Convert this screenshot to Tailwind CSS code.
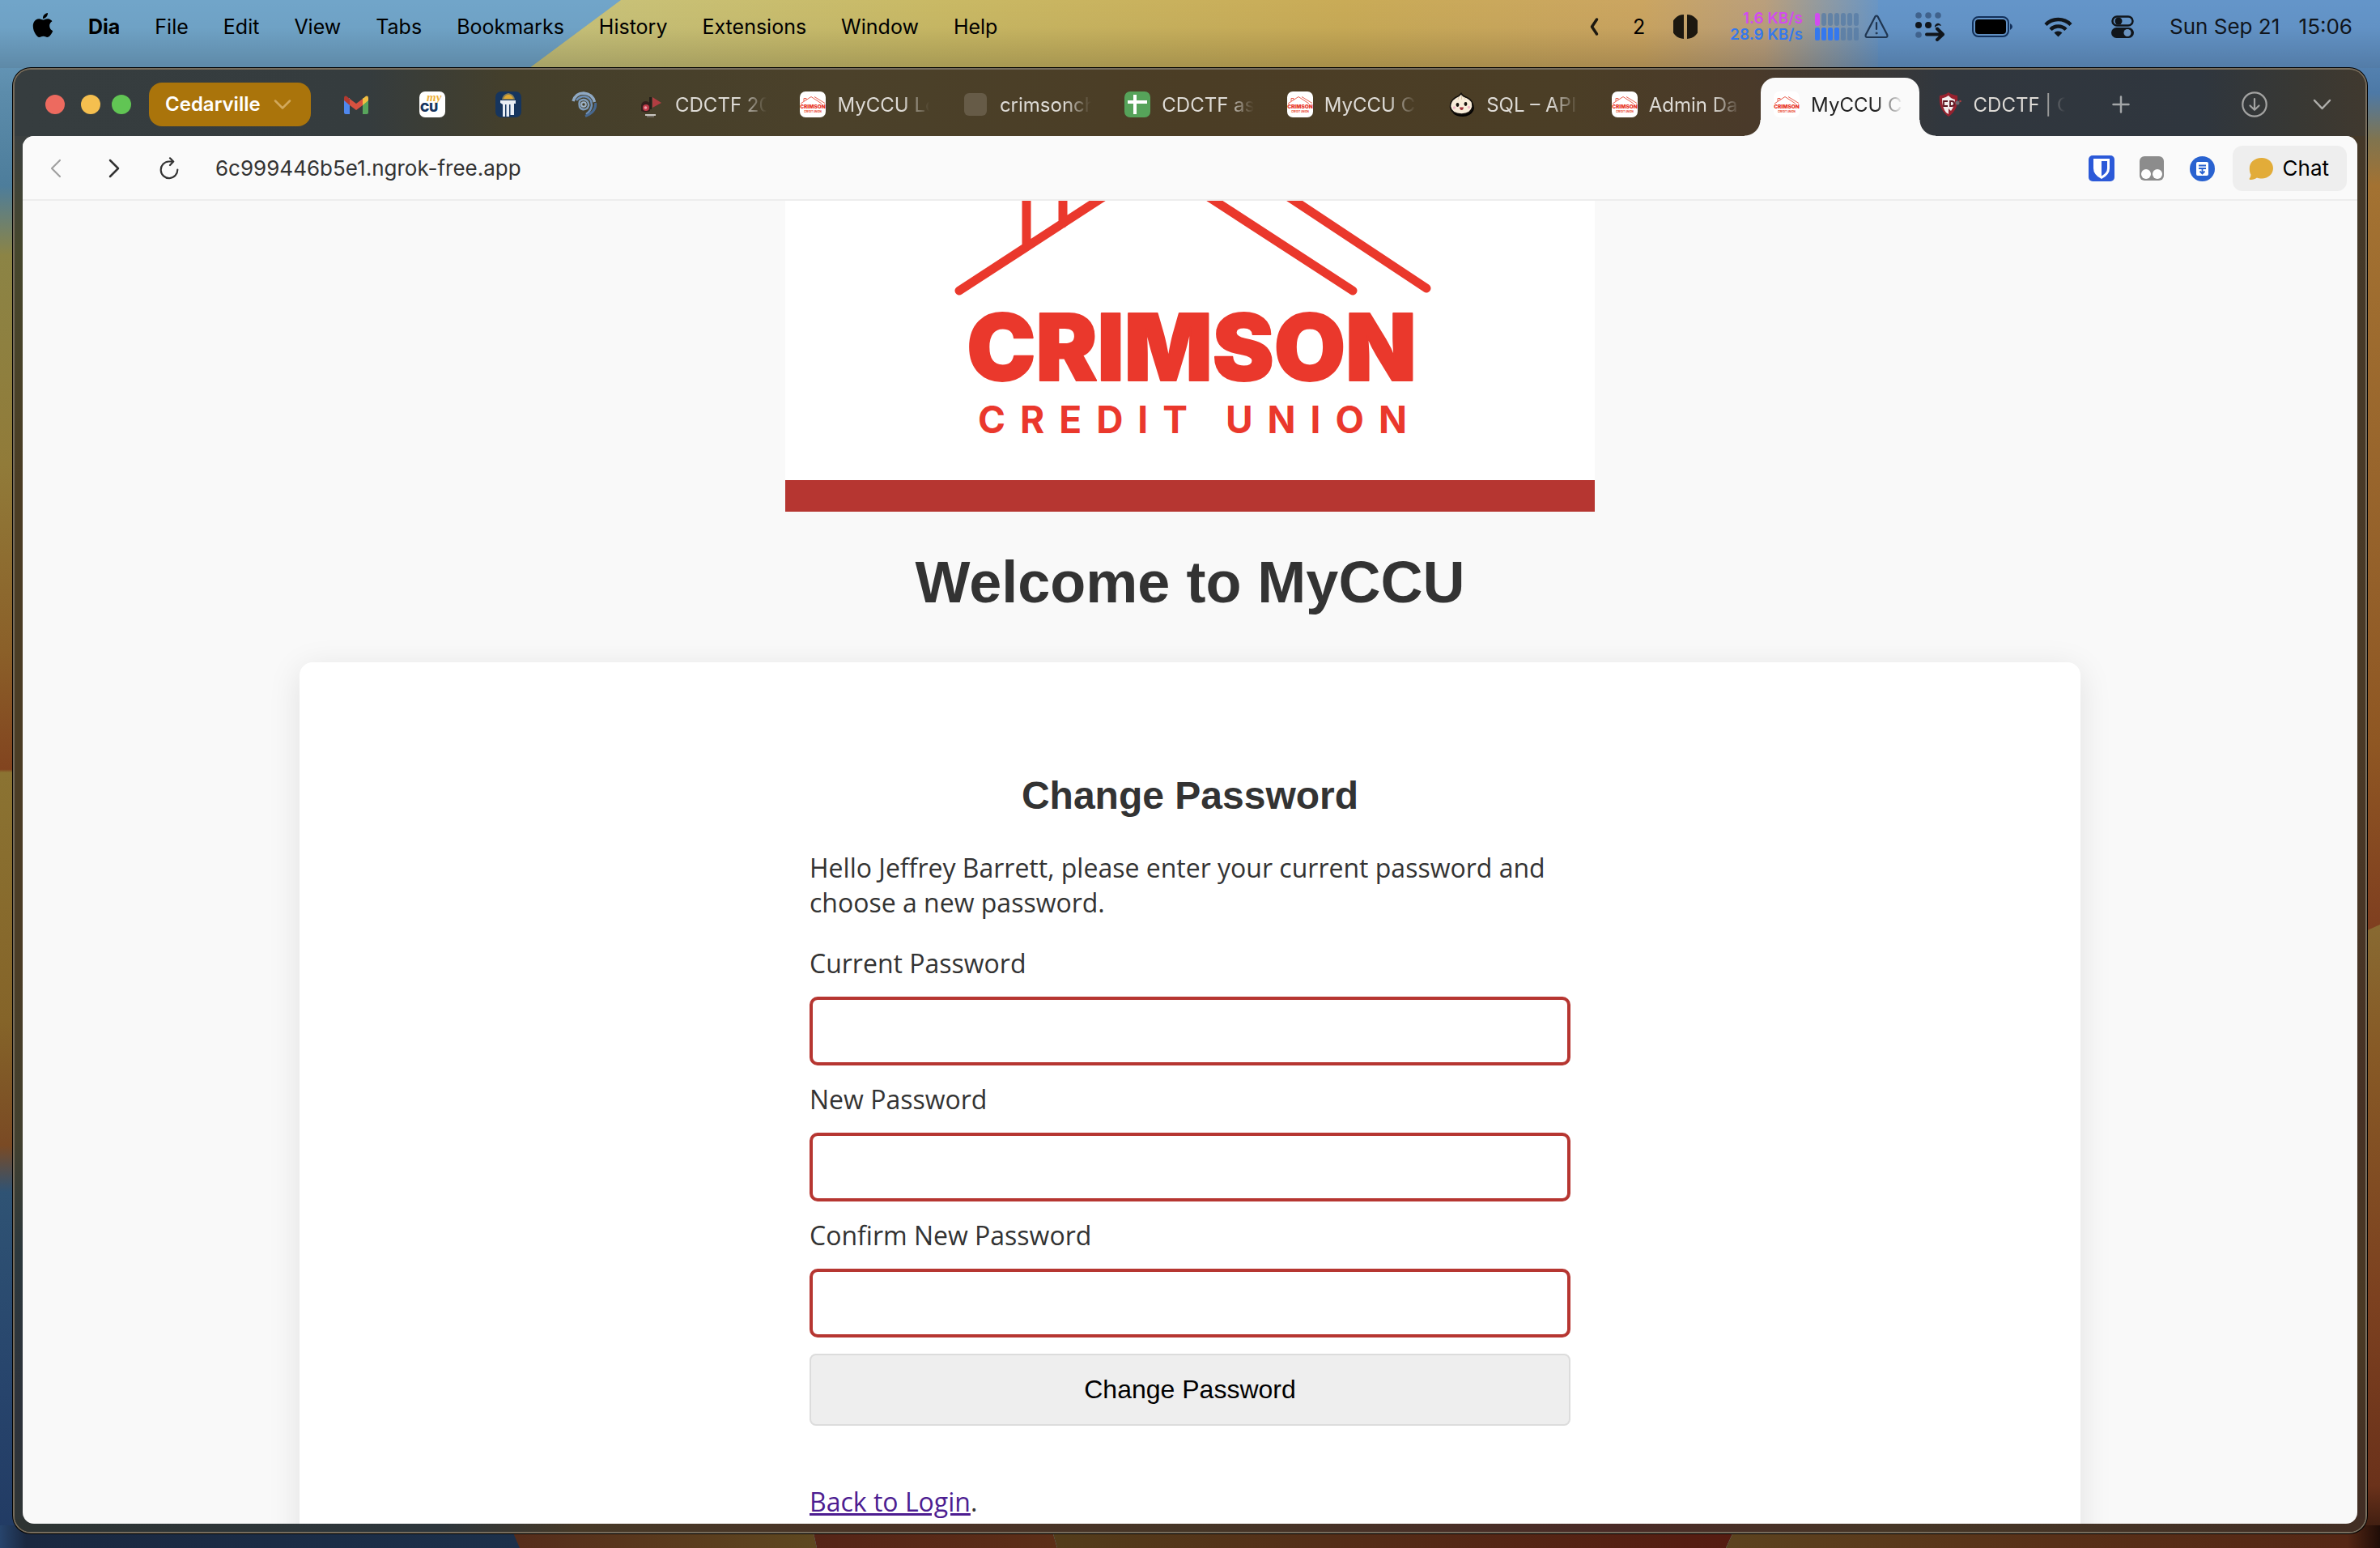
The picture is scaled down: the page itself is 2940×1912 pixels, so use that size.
<!DOCTYPE html>
<html lang="en">
<head>
<meta charset="utf-8">
<title>MyCCU Change Password</title>
<script src="https://cdn.jsdelivr.net/npm/@tailwindcss/browser@4"></script>
</head>
<body class="relative flex h-screen flex-col overflow-hidden bg-[#6c9fc5] font-['Inter',sans-serif] text-black">

<!-- Wallpaper -->
<svg class="absolute inset-0 -z-10 h-full w-full" viewBox="0 0 2940 1912" preserveAspectRatio="none" aria-hidden="true">
  <defs>
    <linearGradient id="wTop"><stop offset="0" stop-color="#c8c37c"/><stop offset=".3" stop-color="#c9b965"/><stop offset=".6" stop-color="#c9ab57"/><stop offset=".82" stop-color="#cba561"/><stop offset=".91" stop-color="#ba9f7c"/><stop offset="1" stop-color="#6495c9"/></linearGradient>
    <linearGradient id="wShade" x2="0" y2="1"><stop offset="0" stop-color="#000" stop-opacity="0"/><stop offset=".4" stop-color="#000" stop-opacity=".02"/><stop offset="1" stop-color="#000" stop-opacity=".17"/></linearGradient>
    <linearGradient id="wLeft" gradientUnits="userSpaceOnUse" x1="0" y1="0" x2="0" y2="1912"><stop offset="0" stop-color="#72a6cb"/><stop offset=".06" stop-color="#5c8cab"/><stop offset=".12" stop-color="#4d7d9b"/><stop offset=".165" stop-color="#8c8445"/><stop offset=".3" stop-color="#917b39"/><stop offset=".42" stop-color="#8b6029"/><stop offset=".497" stop-color="#82441f"/><stop offset=".499" stop-color="#8b7332"/><stop offset=".66" stop-color="#856429"/><stop offset=".74" stop-color="#7a4a24"/><stop offset=".77" stop-color="#2f5374"/><stop offset=".9" stop-color="#27446c"/><stop offset="1" stop-color="#213a63"/></linearGradient>
    <linearGradient id="wRight" gradientUnits="userSpaceOnUse" x1="0" y1="0" x2="0" y2="1912"><stop offset="0" stop-color="#6495c9"/><stop offset=".06" stop-color="#4d79a6"/><stop offset=".09" stop-color="#80744f"/><stop offset=".12" stop-color="#a37232"/><stop offset=".38" stop-color="#94602a"/><stop offset=".48" stop-color="#8f5723"/><stop offset=".6" stop-color="#7f3f20"/></linearGradient>
    <linearGradient id="wRight2" x2="0" y2="1"><stop offset="0" stop-color="#886a32"/><stop offset=".2" stop-color="#875a26"/><stop offset=".6" stop-color="#7c4120"/><stop offset=".9" stop-color="#6b321b"/><stop offset="1" stop-color="#2a140c"/></linearGradient>
    <linearGradient id="b1"><stop offset="0" stop-color="#27446c"/><stop offset=".05" stop-color="#1a2840"/><stop offset="1" stop-color="#1c304a"/></linearGradient>
    <linearGradient id="b2"><stop offset="0" stop-color="#552c1b"/><stop offset="1" stop-color="#5e4820"/></linearGradient>
    <linearGradient id="b3"><stop offset="0" stop-color="#552417"/><stop offset="1" stop-color="#5c2f18"/></linearGradient>
    <linearGradient id="b4"><stop offset="0" stop-color="#533d1b"/><stop offset=".4" stop-color="#542e18"/><stop offset="1" stop-color="#551b11"/></linearGradient>
    <linearGradient id="b5"><stop offset="0" stop-color="#5c431f"/><stop offset=".5" stop-color="#583018"/><stop offset=".95" stop-color="#552715"/><stop offset="1" stop-color="#200d07"/></linearGradient>
  </defs>
  <path d="M0 0H767L654 84H0Z" fill="#71a5c9"/>
  <path d="M767 0H2330V84H654Z" fill="url(#wTop)"/>
  <rect x="2320" width="620" height="84" fill="#6495c9"/>
  <rect width="2940" height="84" fill="url(#wShade)"/>
  <rect y="84" width="40" height="1828" fill="url(#wLeft)"/>
  <rect x="2900" y="84" width="40" height="1828" fill="url(#wRight)"/>
  <path d="M2900 1160L2940 1142V1912H2900Z" fill="url(#wRight2)"/>
  <path d="M0 1884H632L644 1912H0Z" fill="url(#b1)"/>
  <path d="M630 1884H1003L1009 1912H642Z" fill="url(#b2)"/>
  <path d="M1003 1884H1298L1306 1912H1009Z" fill="url(#b3)"/>
  <path d="M1298 1884H2145L2132 1912H1306Z" fill="url(#b4)"/>
  <path d="M2145 1884H2940V1912H2132Z" fill="url(#b5)"/>
</svg>

<!-- System menu bar -->
<header class="flex h-[66px] shrink-0 items-center justify-between pr-[34px] pl-10 text-[25px] leading-8 whitespace-nowrap">
  <nav class="flex items-center gap-[43px]" aria-label="Menu bar">
    <button aria-label="Apple menu"><svg class="-mt-1 h-[30px] w-[26px]" viewBox="1.7 0 20.6 24"><path d="M12.152 6.896c-.948 0-2.415-1.078-3.96-1.04-2.04.027-3.91 1.183-4.961 3.014-2.117 3.675-.546 9.103 1.519 12.09 1.013 1.454 2.208 3.09 3.792 3.039 1.52-.065 2.09-.987 3.935-.987 1.831 0 2.35.987 3.96.948 1.637-.026 2.676-1.48 3.676-2.948 1.156-1.688 1.636-3.325 1.662-3.415-.039-.013-3.182-1.221-3.22-4.857-.026-3.04 2.48-4.494 2.597-4.559-1.429-2.09-3.623-2.324-4.39-2.376-2-.156-3.675 1.09-4.61 1.09zM15.53 3.83c.843-1.012 1.4-2.427 1.245-3.83-1.207.052-2.662.805-3.532 1.818-.78.896-1.454 2.338-1.273 3.714 1.338.104 2.715-.688 3.559-1.701"/></svg></button>
    <button class="font-bold">Dia</button>
    <button>File</button>
    <button>Edit</button>
    <button>View</button>
    <button>Tabs</button>
    <button>Bookmarks</button>
    <button>History</button>
    <button>Extensions</button>
    <button>Window</button>
    <button>Help</button>
  </nav>
  <div class="flex items-center">
    <svg class="h-6 w-3" viewBox="0 0 12 24" fill="none" stroke="#1c1810" stroke-width="3.5" stroke-linecap="round" stroke-linejoin="round"><path d="M9.5 3L3.5 12L9.5 21"/></svg>
    <span class="ml-[42px] w-4">2</span>
    <svg class="ml-[34px] size-[30px]" viewBox="0 0 30 30" fill="#1c1810"><path d="M13 0A15 15 0 0 0 13 30ZM17 0A15 15 0 0 1 17 30Z"/></svg>
    <div class="ml-[34px] w-24 text-right text-[19px] leading-5 font-semibold"><div class="text-[#d24bf0]">1.6 KB/s</div><div class="text-[#3478ee]">28.9 KB/s</div></div>
    <svg class="ml-[15px] h-[34px] w-[54px]" viewBox="0 0 54 34"><g fill="#557ba6" fill-opacity=".75"><rect x="8" width="6" height="16" rx="3"/><rect x="16" width="6" height="16" rx="3"/><rect x="24" width="6" height="16" rx="3"/><rect x="32" width="6" height="16" rx="3"/><rect x="40" width="6" height="16" rx="3"/><rect x="48" width="6" height="16" rx="3"/><rect x="32" y="18" width="6" height="16" rx="2"/><rect x="40" y="18" width="6" height="16" rx="2"/><rect x="48" y="18" width="6" height="16" rx="2"/></g><rect width="6" height="16" rx="3" fill="#d24bf0"/><g fill="#3478ee"><rect y="18" width="6" height="16" rx="2"/><rect x="8" y="18" width="6" height="16" rx="2"/><rect x="16" y="18" width="6" height="16" rx="2"/><rect x="24" y="18" width="6" height="16" rx="2"/></g></svg>
    <svg class="ml-[7px] h-[30px] w-[30px]" viewBox="0 0 30 30" fill="none" stroke="#1f3550" stroke-width="2.2" stroke-linecap="round" stroke-linejoin="round"><path d="M13.4 2.5Q15 .5 16.6 2.500L28.300 25Q29 28 26.500 28H3.500Q1 28 1.700 25Z"/><path d="M15 10V18"/><circle cx="15" cy="23" r="1" fill="#1f3550" stroke-width="1"/></svg>
    <svg class="ml-[33px] h-9 w-9" viewBox="0 0 36 36" fill="#10151b"><g fill="#40628c"><circle cx="4" cy="4" r="3.800"/><circle cx="16" cy="4" r="3.800"/><circle cx="28" cy="4" r="3.800"/><circle cx="4" cy="28" r="3.800"/></g><circle cx="4" cy="16" r="4"/><circle cx="16" cy="16" r="4"/><path d="M24 19A4 4 0 1 1 32 17Q27 15 24 19Z"/><path d="M14 27.500H33M27 20.500L34 27.500L27 34" fill="none" stroke="#10151b" stroke-width="4" stroke-linecap="round" stroke-linejoin="round"/></svg>
    <svg class="ml-[34px] h-[26px] w-[50px]" viewBox="0 0 50 26"><rect x="1" y="1" width="44" height="24" rx="7" fill="none" stroke="#12305a" stroke-width="2"/><rect x="4" y="4" width="38" height="18" rx="4"/><path d="M47 9Q50 10.500 50 13Q50 15.500 47 17Z" fill="#12305a"/></svg>
    <svg class="ml-[39px] h-[26px] w-[35px]" viewBox="0 0 35 26" fill="none" stroke="#10151b" stroke-width="4.500"><path d="M2 10.500A22 22 0 0 1 33 10.500"/><path d="M8 16.500A13.500 13.500 0 0 1 27 16.500"/><path d="M12.500 20.500A7 7 0 0 1 22.500 20.500L17.500 25.500Z" fill="#10151b" stroke="none"/></svg>
    <svg class="ml-12 h-7 w-7" viewBox="0 0 28 28"><rect x="1.500" y="1.500" width="25" height="11" rx="5.500" fill="none" stroke="#10151b" stroke-width="2.500"/><circle cx="9" cy="7" r="4.500" fill="#10151b"/><rect y="15" width="28" height="13" rx="6.500" fill="#10151b"/><circle cx="20" cy="21.500" r="4.500" fill="#6a93c0"/></svg>
    <div class="ml-11 flex w-[226px] justify-between text-[26px] text-[#10151b]"><span>Sun Sep 21</span><span>15:06</span></div>
  </div>
</header>

<!-- Browser window -->
<div class="relative isolate mx-4 mt-[18px] mb-[18px] flex min-h-0 flex-1 flex-col overflow-hidden rounded-[22px] border-2 border-white/25 bg-[#4a3c27] px-2.5 pb-2.5 ring-1 ring-black">
  <svg class="absolute inset-0 -z-10 h-full w-full" viewBox="0 0 2904 1806" preserveAspectRatio="none" aria-hidden="true">
    <defs>
      <linearGradient id="fTop"><stop offset="0" stop-color="#363d3f"/><stop offset=".15" stop-color="#353c3e"/><stop offset=".21" stop-color="#443f2b"/><stop offset=".35" stop-color="#4b412a"/><stop offset=".5" stop-color="#4b3d25"/><stop offset=".66" stop-color="#4b3e26"/><stop offset=".74" stop-color="#4a3a2a"/><stop offset=".82" stop-color="#31373e"/><stop offset=".93" stop-color="#2f363e"/><stop offset=".97" stop-color="#383834"/><stop offset="1" stop-color="#40392f"/></linearGradient>
      <linearGradient id="fLeft" x2="0" y2="1"><stop offset="0" stop-color="#3b4040"/><stop offset=".08" stop-color="#46472d"/><stop offset=".25" stop-color="#4b3d24"/><stop offset=".6" stop-color="#4b3d26"/><stop offset=".72" stop-color="#42402f"/><stop offset=".8" stop-color="#2c383d"/><stop offset=".92" stop-color="#2d323b"/><stop offset="1" stop-color="#2f3535"/></linearGradient>
      <linearGradient id="fRight" x2="0" y2="1"><stop offset="0" stop-color="#443828"/><stop offset=".4" stop-color="#4a3a26"/><stop offset=".7" stop-color="#463124"/><stop offset=".85" stop-color="#4a3a24"/><stop offset="1" stop-color="#402c24"/></linearGradient>
      <linearGradient id="fBot"><stop offset="0" stop-color="#2e3433"/><stop offset=".18" stop-color="#2d363c"/><stop offset=".24" stop-color="#463826"/><stop offset=".4" stop-color="#4a3226"/><stop offset=".5" stop-color="#453526"/><stop offset=".68" stop-color="#4a2a26"/><stop offset=".8" stop-color="#463626"/><stop offset="1" stop-color="#422e24"/></linearGradient>
    </defs>
    <rect width="2904" height="100" fill="url(#fTop)"/>
    <rect y="82" width="30" height="1724" fill="url(#fLeft)"/>
    <rect x="2870" y="82" width="34" height="1724" fill="url(#fRight)"/>
    <rect y="1790" width="2904" height="16" fill="url(#fBot)"/>
  </svg>

  <!-- Tab strip -->
  <div class="flex h-[82px] shrink-0 items-center pt-1 pr-8 pl-7 text-[24px] leading-8 whitespace-nowrap text-[#dedbd6]">
    <button class="size-6 rounded-full bg-[#ed6a5f]" aria-label="Close"></button>
    <button class="ml-5 size-6 rounded-full bg-[#f5bf4f]" aria-label="Minimize"></button>
    <button class="ml-3.5 size-6 rounded-full bg-[#61c554]" aria-label="Zoom"></button>
    <button class="ml-[22px] flex h-[54px] w-[200px] items-center justify-between rounded-2xl bg-[#aa740b] pr-6 pl-5 font-semibold text-white">Cedarville
      <svg class="h-3 w-[22px]" viewBox="0 0 22 12" fill="none" stroke="#d2a95c" stroke-width="2.500" stroke-linecap="round" stroke-linejoin="round"><path d="M2 1.500L11 10.500L20 1.500"/></svg>
    </button>
    <div class="ml-[9px] flex h-full w-[379px] items-center">
      <button class="grid w-[94px] place-items-center" aria-label="Gmail">
        <svg class="h-[23px] w-[30px]" viewBox="0 0 30 23"><path d="M0 3H7V23H2Q0 23 0 21Z" fill="#4f87ed"/><path d="M23 3H30V21Q30 23 28 23H23Z" fill="#58a55c"/><path d="M23 4L27 .8Q30 -.5 30 3V6L23 12Z" fill="#f2be42"/><path d="M7 4L3 .8Q0 -.5 0 3V6L7 12Z" fill="#b3392f"/><path d="M7 4L15 10L23 4V12L15 18L7 12Z" fill="#d85140"/></svg>
      </button>
      <button class="grid w-[94px] place-items-center" aria-label="MyCU">
        <svg class="size-8" viewBox="0 0 32 32"><rect width="32" height="32" rx="7" fill="#fff"/><text x="9" y="12" font-family="Liberation Serif,serif" font-weight="700" font-style="italic" font-size="15" fill="#edb13c">my</text><text x="1" y="25" font-family="Inter,sans-serif" font-weight="900" font-size="15" fill="#17355f">CU</text></svg>
      </button>
      <button class="grid w-[94px] place-items-center" aria-label="University portal">
        <svg class="size-8" viewBox="0 0 32 32"><rect width="32" height="32" rx="7" fill="#16355e"/><path d="M8 10Q9 3 16 2Q23 3 24 10Z" fill="#8a7f55"/><path d="M10 9Q12 4 16 4Q20 4 22 9Z" fill="#e0a933"/><path d="M6 11H25V15H23V29H19V16H17V31H14V16H12V31H9V16L6 14Z" fill="#e9eef5"/><path d="M13 16H14V31H13ZM18 16H19V29H18Z" fill="#7f95b1"/></svg>
      </button>
      <button class="grid w-[94px] place-items-center" aria-label="Swirl">
        <svg class="size-8" viewBox="0 0 32 32" fill="none"><path d="M2 12Q5 2 15 2Q26 3 28.500 13" stroke="#8fa9c4" stroke-width="3.500"/><path d="M6 11Q10 6 16 6Q25 8 25 17Q24 24 18 28" stroke="#6d8fb6" stroke-width="2.500"/><path d="M29.500 14Q31 25 17 30.500" stroke="#47688f" stroke-width="3"/><path d="M10 12Q15 8 19.500 12Q23 17 19 21Q13 24 10 19Q9 15 10 12Z" stroke="#7f9bb8" stroke-width="2.500"/><circle cx="15" cy="16" r="2.800" stroke="#9fb6cd" stroke-width="2"/></svg>
      </button>
    </div>

    <div class="grid h-full flex-1 grid-cols-9 gap-[5px]" role="tablist">
      <button role="tab" class="flex min-w-0 items-center gap-3.5 pr-5 pl-4">
        <svg class="size-8 shrink-0" viewBox="0 0 32 32"><path d="M14 7H17V22H14Z" fill="#24201a"/><path d="M18 7L29 14L18 20Z" fill="#b13d42"/><path d="M4 17Q5 12 10 12Q15 12 15 18V24Q10 27 4 24Z" fill="#33201c"/><circle cx="10" cy="20" r="4" fill="#c23b4b"/><circle cx="9.500" cy="20" r="1.800" fill="#f0a0a8"/><path d="M9 28H22V30H9Z" fill="#c9c6c0"/><path d="M11 30H20V32H11Z" fill="#6d665c"/></svg>
        <span class="min-w-0 flex-1 overflow-hidden pt-0.5 text-left [mask-image:linear-gradient(to_right,#000_70%,transparent)]">CDCTF 20</span>
      </button>
      <button role="tab" class="flex min-w-0 items-center gap-3.5 pr-5 pl-4">
        <svg class="size-8 shrink-0" viewBox="0 0 32 32"><rect width="32" height="32" rx="7" fill="#fff"/><g id="ccu"><path d="M1 15L14 6.500L27 15M18 6.500L31 14.500M5 12V8.500H8V10.500" fill="none" stroke="#e9604f" stroke-width="1"/><text x="16" y="21" text-anchor="middle" font-family="Inter,sans-serif" font-weight="900" font-size="6.500" fill="#e8382b">CRIMSON</text><text x="16" y="26" text-anchor="middle" font-family="Inter,sans-serif" font-weight="700" font-size="3" fill="#e8382b">CREDIT UNION</text></g></svg>
        <span class="min-w-0 flex-1 overflow-hidden pt-0.5 text-left [mask-image:linear-gradient(to_right,#000_70%,transparent)]">MyCCU Lo</span>
      </button>
      <button role="tab" class="flex min-w-0 items-center gap-3.5 pr-5 pl-4">
        <svg class="size-8 shrink-0" viewBox="0 0 32 32"><rect x="2" y="2" width="28" height="28" rx="6" fill="#665b47"/></svg>
        <span class="min-w-0 flex-1 overflow-hidden pt-0.5 text-left [mask-image:linear-gradient(to_right,#000_70%,transparent)]">crimsonch</span>
      </button>
      <button role="tab" class="flex min-w-0 items-center gap-3.5 pr-5 pl-4">
        <svg class="size-8 shrink-0" viewBox="0 0 32 32"><rect width="32" height="32" rx="7" fill="#56a35a"/><path d="M11 4H15V11H28V15H15V28H11V15H4V11H11Z" fill="#fff"/></svg>
        <span class="min-w-0 flex-1 overflow-hidden pt-0.5 text-left [mask-image:linear-gradient(to_right,#000_70%,transparent)]">CDCTF as</span>
      </button>
      <button role="tab" class="flex min-w-0 items-center gap-3.5 pr-5 pl-4">
        <svg class="size-8 shrink-0" viewBox="0 0 32 32"><rect width="32" height="32" rx="7" fill="#fff"/><use href="#ccu"/></svg>
        <span class="min-w-0 flex-1 overflow-hidden pt-0.5 text-left [mask-image:linear-gradient(to_right,#000_70%,transparent)]">MyCCU C</span>
      </button>
      <button role="tab" class="flex min-w-0 items-center gap-3.5 pr-5 pl-4">
        <svg class="size-8 shrink-0" viewBox="0 0 32 32"><path d="M16 4Q20 7 26 10Q33 17 30 24Q26 31 17 31Q9 31 5 27Z" fill="#050403"/><path d="M15 2.500Q17 6 22 7.500Q30 11 29 19Q27 28 15.500 28Q3 28 1.500 19Q1 12 8 7.500Q13 5.500 15 2.500Z" fill="#f8ecd9" stroke="#15110c" stroke-width="1.600"/><path d="M15.500 5V10M12 7L11 10M19 7L20 10" stroke="#d9c7a8" stroke-width=".9"/><ellipse cx="10.500" cy="16.500" rx="1.900" ry="2.400" fill="#15110c"/><ellipse cx="20.500" cy="15.500" rx="1.900" ry="2.400" fill="#15110c"/><circle cx="6.500" cy="20" r="1.700" fill="#efb5c5"/><circle cx="24.500" cy="19.500" r="1.700" fill="#efb5c5"/><path d="M13 19.500H18Q17.500 23 15.500 23Q13.500 23 13 19.500Z" fill="#9e2f38"/></svg>
        <span class="min-w-0 flex-1 overflow-hidden pt-0.5 text-left [mask-image:linear-gradient(to_right,#000_70%,transparent)]">SQL – API</span>
      </button>
      <button role="tab" class="flex min-w-0 items-center gap-3.5 pr-5 pl-4">
        <svg class="size-8 shrink-0" viewBox="0 0 32 32"><rect width="32" height="32" rx="7" fill="#fff"/><use href="#ccu"/></svg>
        <span class="min-w-0 flex-1 overflow-hidden pt-0.5 text-left [mask-image:linear-gradient(to_right,#000_70%,transparent)]">Admin Da</span>
      </button>
      <button role="tab" aria-selected="true" class="relative flex min-w-0 items-center gap-3.5 pr-5 pl-4 text-[#222]">
        <span class="absolute inset-x-0 top-1.5 bottom-0 rounded-t-[18px] bg-[#fafafa]"></span>
        <span class="absolute bottom-0 -left-5 size-5 bg-[radial-gradient(circle_at_0_0,transparent_19px,#fafafa_20px)]"></span>
        <span class="absolute -right-5 bottom-0 size-5 bg-[radial-gradient(circle_at_100%_0,transparent_19px,#fafafa_20px)]"></span>
        <svg class="relative size-8 shrink-0" viewBox="0 0 32 32"><rect width="32" height="32" rx="7" fill="#fff"/><use href="#ccu"/></svg>
        <span class="relative min-w-0 flex-1 overflow-hidden pt-0.5 text-left [mask-image:linear-gradient(to_right,#000_70%,transparent)]">MyCCU Ch</span>
      </button>
      <button role="tab" class="flex min-w-0 items-center gap-3.5 pr-5 pl-4">
        <svg class="size-8 shrink-0" viewBox="0 0 32 32"><path d="M15 1Q19 4 26 5Q28 22 15 31Q2 22 4 5Q11 4 15 1Z" fill="#97222f"/><path d="M15 5Q11 8 7 8.500Q7 20 12 26L15 28V21L18 24Q22 19 23 10Q18 9 15 5Z" fill="#f3eeee"/><path d="M14 12H9V18H14M17 12V18H19Q22 18 22 15Q22 12 19 12Z" fill="none" stroke="#5d1721" stroke-width="1.800"/><circle cx="26" cy="14" r="2.500" fill="#6f6a70"/><circle cx="29.500" cy="12" r="1.300" fill="#b13d42"/></svg>
        <span class="min-w-0 flex-1 overflow-hidden pt-0.5 text-left [mask-image:linear-gradient(to_right,#000_70%,transparent)]">CDCTF | C</span>
      </button>
    </div>

    <button class="ml-[38px]" aria-label="New tab"><svg class="size-[22px]" viewBox="0 0 22 22" stroke="#a3a6a8" stroke-width="2.500" stroke-linecap="round"><path d="M11 1.500V20.500M1.500 11H20.500"/></svg></button>
    <button class="ml-[138px]" aria-label="Downloads"><svg class="size-8" viewBox="0 0 32 32" fill="none" stroke="#a3a3a2" stroke-width="2.200" stroke-linecap="round" stroke-linejoin="round"><circle cx="16" cy="16" r="14.700"/><path d="M16 9V22.500M10.500 17.500L16 22.800L21.500 17.500"/></svg></button>
    <button class="ml-14" aria-label="All tabs"><svg class="h-3.5 w-[23px]" viewBox="0 0 23 14" fill="none" stroke="#b0afac" stroke-width="2.500" stroke-linecap="round" stroke-linejoin="round"><path d="M2 2L11.500 12L21 2"/></svg></button>
  </div>

  <div class="flex min-h-0 flex-1 flex-col overflow-hidden rounded-[14px] bg-[#f9f9f9]">
    <!-- Address bar -->
    <div class="flex h-20 shrink-0 items-center justify-between border-b-2 border-[#ededed] bg-[#fafafa] pt-0.5 pr-[13px] pl-[34px] text-[26px] leading-8">
      <div class="flex items-center">
        <button aria-label="Back"><svg class="h-6 w-[14px]" viewBox="0 0 14 24" fill="none" stroke="#a0a0a0" stroke-width="2.200" stroke-linecap="round" stroke-linejoin="round"><path d="M12 2L2 12L12 22"/></svg></button>
        <button class="ml-[58px]" aria-label="Forward"><svg class="h-6 w-[14px]" viewBox="0 0 14 24" fill="none" stroke="#333" stroke-width="2.500" stroke-linecap="round" stroke-linejoin="round"><path d="M2 2L12 12L2 22"/></svg></button>
        <button class="ml-[49px]" aria-label="Reload"><svg class="h-7 w-6" viewBox="0 0 24 28" fill="none" stroke="#333" stroke-width="2.200" stroke-linecap="round" stroke-linejoin="round"><path d="M17 5.500H11.500A10.300 10.300 0 1 0 22.300 15.500M13 1.300L17.200 5.500L13 10"/></svg></button>
        <input class="ml-[45px] w-[900px] text-[#333] outline-none" aria-label="Address" value="6c999446b5e1.ngrok-free.app">
      </div>
      <div class="flex items-center">
        <button aria-label="Password manager"><svg class="size-8" viewBox="0 0 32 32"><rect width="32" height="32" rx="5" fill="#2b59d8"/><path d="M6 4H26V16Q26 24 16 29Q6 24 6 16Z" fill="#fff"/><path d="M16 7H23V16Q23 21.500 16 25.500Z" fill="#2b59d8"/></svg></button>
        <button class="ml-[31px]" aria-label="Reader extension"><svg class="size-[30px]" viewBox="0 0 30 30"><rect width="30" height="30" rx="6" fill="#8c8c8c"/><circle cx="8" cy="22" r="6" fill="#fff"/><circle cx="22" cy="22" r="6" fill="#fff"/></svg></button>
        <button class="ml-8" aria-label="Save page"><svg class="size-[31px]" viewBox="0 0 31 31"><circle cx="15.500" cy="15.500" r="15.500" fill="#2962d0"/><rect x="8" y="7" width="15" height="17" rx="2" fill="#fff"/><path d="M11 11.500H20M11 15H20M15.500 15V21M12.500 18.500L15.500 21.500L18.500 18.500" fill="none" stroke="#2962d0" stroke-width="1.800"/></svg></button>
        <button class="ml-[22px] flex h-14 items-center gap-3 rounded-xl bg-[#eee] pr-[22px] pl-5"><svg class="h-[27px] w-[30px]" viewBox="0 0 30 27"><path d="M15.500 0C24 0 30 5.500 30 12.800C30 20 24 25.500 16 25.500C13.500 25.500 11.500 25 10 24.400C7.500 26.300 4 27.400 1 26.700C.3 26.500 .3 25.900 .8 25.400C2 24 2.500 22 2.400 20.400C1 18.300 .8 15.500 .8 12.800C.8 5.500 7 0 15.500 0Z" fill="#e2ac39"/></svg>Chat</button>
      </div>
    </div>

    <!-- Page -->
    <main class="flex min-h-0 flex-1 flex-col items-center overflow-hidden font-['Open_Sans',sans-serif] text-[32px] leading-[43px] text-[#333]">
      <svg class="block h-[345px] w-full max-w-[1000px] shrink-0 bg-white" viewBox="970 248 1000 345" role="img" aria-label="Crimson Credit Union">
        <g fill="none" stroke="#ea382c" stroke-width="11" stroke-linecap="round"><path d="M1185 359L1371 238M1268 240V304M1313 240V276M1671 359L1485 238M1762 356L1584 238"/></g>
        <g fill="#ea382c" font-family="Inter,sans-serif" text-anchor="middle">
          <text x="1472" y="470" font-size="114" font-weight="900" stroke="#ea382c" stroke-width="2" stroke-linejoin="round">CRIMSON</text>
          <text x="1482" y="535" font-size="46" font-weight="700" letter-spacing="18">CREDIT UNION</text>
        </g>
      </svg>
      <div class="h-[39px] w-full max-w-[1000px] shrink-0 bg-[#b63631]"></div>
      <h1 class="mt-[46px] shrink-0 font-['Liberation_Sans',sans-serif] text-[72px] leading-[82px] font-bold">Welcome to MyCCU</h1>
      <section class="mt-[58px] flex w-full max-w-[2200px] shrink-0 flex-col items-center rounded-2xl bg-white pt-[137px] pb-20 shadow-[0_8px_40px_rgba(0,0,0,0.1)]">
        <form class="flex w-full max-w-[940px] flex-col">
          <h2 class="text-center font-['Liberation_Sans',sans-serif] text-[48px] leading-[55px] font-bold">Change Password</h2>
          <p class="mt-10">Hello Jeffrey Barrett, please enter your current password and choose a new password.</p>
          <label class="mt-8" for="current">Current Password</label>
          <input id="current" type="password" class="mt-5 h-[85px] rounded-[10px] border-4 border-[#b63631] bg-white px-5">
          <label class="mt-5" for="new">New Password</label>
          <input id="new" type="password" class="mt-5 h-[85px] rounded-[10px] border-4 border-[#b63631] bg-white px-5">
          <label class="mt-5" for="confirm">Confirm New Password</label>
          <input id="confirm" type="password" class="mt-5 h-[85px] rounded-[10px] border-4 border-[#b63631] bg-white px-5">
          <button type="button" class="mt-5 h-[89px] rounded-lg border-2 border-[#dcdcdc] bg-[#eee] font-['Liberation_Sans',sans-serif] text-black">Change Password</button>
          <p class="mt-[72px]"><a href="#" class="text-[#4d1d91] underline">Back to Login</a>.</p>
        </form>
      </section>
    </main>
  </div>
</div>
</body>
</html>
